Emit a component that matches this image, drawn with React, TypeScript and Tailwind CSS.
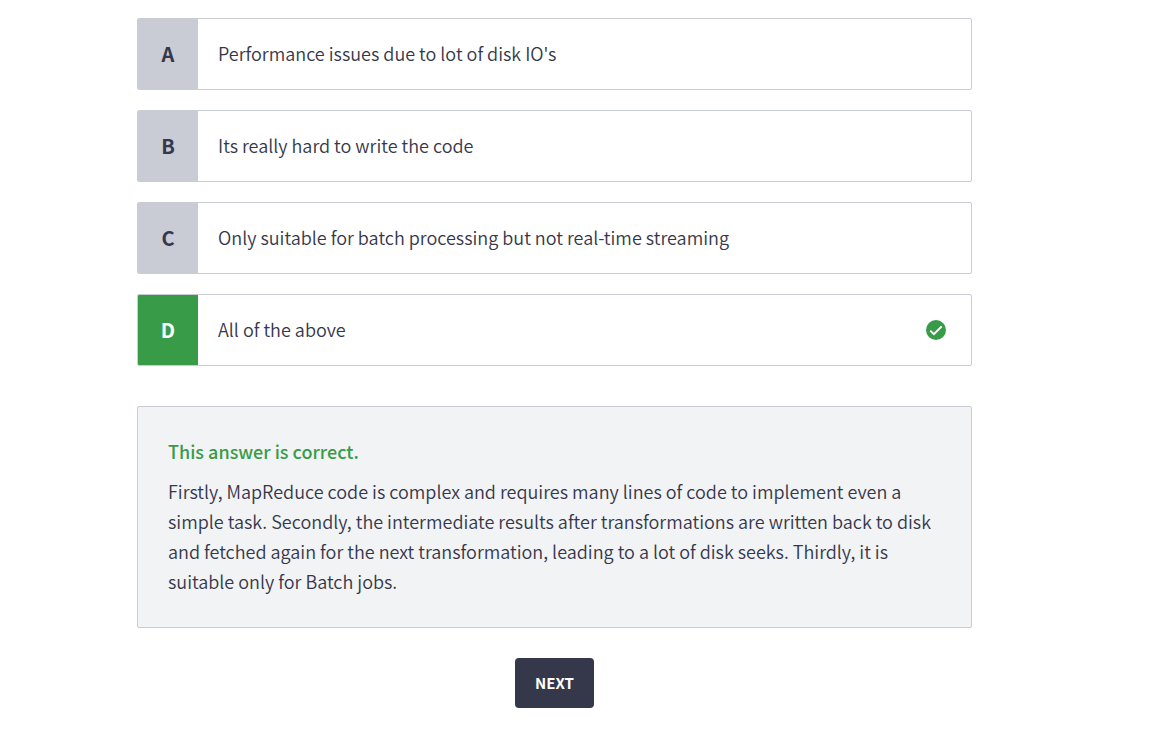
const options = [
  { letter: "A", text: "Performance issues due to lot of disk IO's", correct: false },
  { letter: "B", text: "Its really hard to write the code", correct: false },
  { letter: "C", text: "Only suitable for batch processing but not real-time streaming", correct: false },
  { letter: "D", text: "All of the above", correct: true },
];

function CheckBadge() {
  return (
    <svg viewBox="0 0 20 20" className="mr-[25px] size-5 shrink-0" role="img" aria-label="Correct">
      <circle cx="10" cy="10" r="10" fill="#389b48" />
      <path d="M4.2 10.6 7.9 14.2 15.7 6.4" fill="none" stroke="#fff" strokeWidth="2" />
    </svg>
  );
}

export default function App() {
  return (
    <main className="bg-white pt-[18px] pr-[180px] pb-[30px] pl-[137px] font-['Noto_Sans_CJK_SC',sans-serif] text-[18px] font-[350] text-[#35374a]">
      <ul className="flex flex-col gap-5">
        {options.map((o) => (
          <li key={o.letter}>
            <button
              type="button"
              aria-pressed={o.correct}
              className="flex h-[72px] w-full items-center overflow-hidden rounded-[2px] border border-[#c9cbd5] bg-white text-left"
            >
              <span
                className={
                  o.correct
                    ? "flex w-[60px] shrink-0 items-center justify-center self-stretch bg-[#389b48] text-[20px] font-bold text-white"
                    : "flex w-[60px] shrink-0 items-center justify-center self-stretch bg-[#c9cbd5] text-[20px] font-bold"
                }
              >
                {o.letter}
              </span>
              <span className="grow px-5 pb-[2px]">{o.text}</span>
              {o.correct && <CheckBadge />}
            </button>
          </li>
        ))}
      </ul>
      <section className="mt-10 rounded-[2px] border border-[#c9cbd5] bg-[#f2f3f5] px-[30px] pt-[29px] pb-[31px] leading-[30px]">
        <h2 className="mb-[10px] font-medium text-[#389b48]">This answer is correct.</h2>
        <p>
          Firstly, MapReduce code is complex and requires many lines of code to implement even a simple task. Secondly,
          the intermediate results after transformations are written back to disk and fetched again for the next
          transformation, leading to a lot of disk seeks. Thirdly, it is suitable only for Batch jobs.
        </p>
      </section>
      <div className="mt-[30px] flex justify-center">
        <button type="button" className="h-[50px] rounded-[4px] bg-[#35374a] px-5 text-[15px] font-bold text-white">
          NEXT
        </button>
      </div>
    </main>
  );
}
